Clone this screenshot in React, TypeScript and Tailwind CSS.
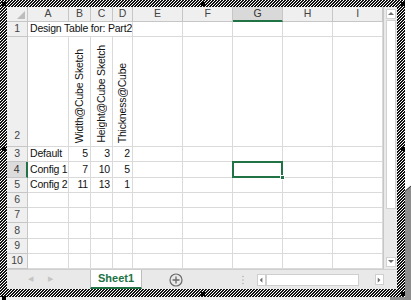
import React from "react";

const letters = ["A", "B", "C", "D", "E", "F", "G", "H", "I"];

const data: Record<number, [string, string, string, string]> = {
  3: ["Default", "5", "3", "2"],
  4: ["Config 1", "7", "10", "5"],
  5: ["Config 2", "11", "13", "1"],
};

const vertical = ["Width@Cube Sketch", "Height@Cube Sketch", "Thickness@Cube"];

const cell = "border-r border-b border-[#dadada] flex items-center overflow-hidden";
const head = "border-r border-b border-[#c6c6c6] bg-[#efefef] flex items-center justify-center text-[#444]";

function Handle({ className }: { className: string }) {
  return <div className={"absolute w-[4px] h-[4px] bg-black " + className} />;
}

function Arrow({ dir }: { dir: "up" | "down" | "left" | "right" }) {
  const pts = {
    up: "1,5 4,2 7,5",
    down: "1,2 4,5 7,2",
    left: "5,1 2,4 5,7",
    right: "2,1 5,4 2,7",
  }[dir];
  return (
    <svg width="8" height="8" viewBox="0 0 8 8">
      <polygon points={pts} fill="#6e6e6e" />
    </svg>
  );
}

function Grid() {
  const cells: React.ReactNode[] = [];

  // column headers
  cells.push(
    <div key="corner" className={head + " relative"}>
      <svg className="absolute right-[2px] bottom-[2px]" width="8" height="8" viewBox="0 0 8 8">
        <polygon points="8,0 8,8 0,8" fill="#bdbdbd" />
      </svg>
    </div>
  );
  letters.forEach((l) =>
    cells.push(
      <div
        key={"h" + l}
        className={
          l === "G"
            ? "border-r border-[#c6c6c6] border-b-2 border-b-[#217346] bg-[#d9d9d9] flex items-center justify-center text-[#333]"
            : head
        }
      >
        {l}
      </div>
    )
  );

  for (let r = 1; r <= 10; r++) {
    const selected = r === 4;
    cells.push(
      <div
        key={"r" + r}
        className={
          selected
            ? "border-b border-[#c6c6c6] border-r-2 border-r-[#217346] bg-[#dcdcdc] flex items-center justify-center text-[#333]"
            : head + (r === 2 ? " !items-end pb-[2px]" : "")
        }
      >
        {r}
      </div>
    );

    if (r === 1) {
      cells.push(
        <div key="a1" className={cell + " col-span-4 pl-[2px] whitespace-nowrap"}>
          Design Table for: Part2
        </div>
      );
      for (let c = 4; c < 9; c++) cells.push(<div key={"1-" + c} className={cell} />);
      continue;
    }

    if (r === 2) {
      cells.push(<div key="a2" className={cell} />);
      vertical.forEach((t, i) =>
        cells.push(
          <div key={"v" + i} className={cell + " !items-end justify-center pb-[3px]"}>
            <span className="[writing-mode:vertical-rl] rotate-180 whitespace-nowrap leading-[11px]">{t}</span>
          </div>
        )
      );
      for (let c = 4; c < 9; c++) cells.push(<div key={"2-" + c} className={cell} />);
      continue;
    }

    const row = data[r];
    letters.forEach((l, c) => {
      const v = row ? row[c] : undefined;
      if (c === 0) {
        cells.push(
          <div key={r + l} className={cell + " pl-[2px] whitespace-nowrap"}>
            {v}
          </div>
        );
      } else if (c <= 3) {
        cells.push(
          <div key={r + l} className={cell + " justify-end pr-[2px]"}>
            {v}
          </div>
        );
      } else if (l === "G" && selected) {
        cells.push(
          <div key={r + l} className={cell + " relative !overflow-visible"}>
            <div className="absolute -left-[1px] -top-[1px] w-[51px] h-[17px] border-2 border-[#217346]" />
            <div className="absolute -right-[3px] -bottom-[3px] w-[5px] h-[5px] bg-[#217346] border border-white" />
          </div>
        );
      } else {
        cells.push(<div key={r + l} className={cell} />);
      }
    });
  }

  return (
    <div className="w-[376px] h-[262px] overflow-hidden grid grid-cols-[21px_41px_22px_22px_20px_50px_50px_50px_50px_50px] grid-rows-[15px_15px_110px_repeat(8,15.25px)]">
      {cells}
    </div>
  );
}

export default function App() {
  return (
    <div className="relative w-[411px] h-[300px] overflow-hidden bg-white font-['Liberation_Sans',Arial,sans-serif] text-[10.5px] tracking-[-0.2px] text-[#111]">
      {/* canvas behind the embedded sheet */}
      <svg className="absolute left-0 top-0" width="411" height="300" viewBox="0 0 411 300">
        <rect x="0" y="297" width="390" height="3" fill="#ececec" />
        <path d="M411 186 Q398 194 400 214 Q402 224 401 236 L401 297 L390 297 L390 300 L411 300 Z" fill="#8e8e8e" />
        <path d="M411 186 Q398 194 400 214 Q402 224 401 236" fill="none" stroke="#3a3a3a" strokeWidth="1" />
      </svg>

      <div className="relative w-[405px] h-[297px] pl-[7px] pt-[7px] pr-[8px] pb-[8px] bg-[repeating-linear-gradient(135deg,#111_0_0.85px,#fff_0.85px_2.1213px)]">
        <div className="w-[390px] h-[282px] bg-white flex flex-col">
          <div className="flex h-[262px]">
            <Grid />
            <div className="w-[14px] h-[262px] bg-[#e9e9e9] border-l border-[#c6c6c6] flex flex-col items-center pt-[2px] pb-[2px]">
              <div className="w-[10px] h-[10px] bg-white border border-[#d2d2d2] flex items-center justify-center">
                <Arrow dir="up" />
              </div>
              <div className="w-[10px] h-[189px] bg-white border border-[#d2d2d2] mt-[1px]" />
              <div className="flex-1" />
              <div className="w-[10px] h-[10px] bg-white border border-[#d2d2d2] flex items-center justify-center">
                <Arrow dir="down" />
              </div>
            </div>
          </div>

          <div className="h-[20px] bg-[#e9e9e9] border-t border-[#cfcfcf] flex items-center">
            <div className="w-[83px] h-full flex items-center pl-[21px] gap-[15px] text-[7px] text-[#c4c4c4]">
              <span>◀</span>
              <span>▶</span>
            </div>
            <div className="w-[52px] h-full -mt-[1px] bg-white border-l border-r border-[#bdbdbd] border-b-2 border-b-[#217346] flex items-center justify-center font-bold text-[11px] tracking-normal text-[#217346]">
              Sheet1
            </div>
            <div className="w-[27px]" />
            <svg width="14" height="14" viewBox="0 0 14 14">
              <circle cx="7" cy="7" r="6" fill="none" stroke="#6a6a6a" strokeWidth="1.2" />
              <path d="M7 3.5V10.5M3.5 7H10.5" stroke="#6a6a6a" strokeWidth="1.3" />
            </svg>
            <div className="w-[58px]" />
            <svg width="4" height="10" viewBox="0 0 4 10">
              <circle cx="2" cy="1.5" r="0.8" fill="#b5b5b5" />
              <circle cx="2" cy="5" r="0.8" fill="#b5b5b5" />
              <circle cx="2" cy="8.5" r="0.8" fill="#b5b5b5" />
            </svg>
            <div className="w-[12px]" />
            <div className="w-[9px] h-[12px] bg-white border border-[#cfcfcf] flex items-center justify-center">
              <Arrow dir="left" />
            </div>
            <div className="w-[93px] h-[12px] bg-white border border-[#cfcfcf]" />
            <div className="w-[16px]" />
            <div className="w-[9px] h-[11px] bg-white border border-[#cfcfcf] flex items-center justify-center">
              <Arrow dir="right" />
            </div>
          </div>
        </div>
      </div>

      {/* selection handles */}
      <Handle className="left-[2px] top-[2px]" />
      <Handle className="left-[201px] top-[2px]" />
      <Handle className="left-[401px] top-[2px]" />
      <Handle className="left-[2px] top-[147px]" />
      <Handle className="left-[401px] top-[147px]" />
      <Handle className="left-[2px] top-[296px]" />
      <Handle className="left-[201px] top-[292px]" />
      <Handle className="left-[401px] top-[292px]" />
    </div>
  );
}
